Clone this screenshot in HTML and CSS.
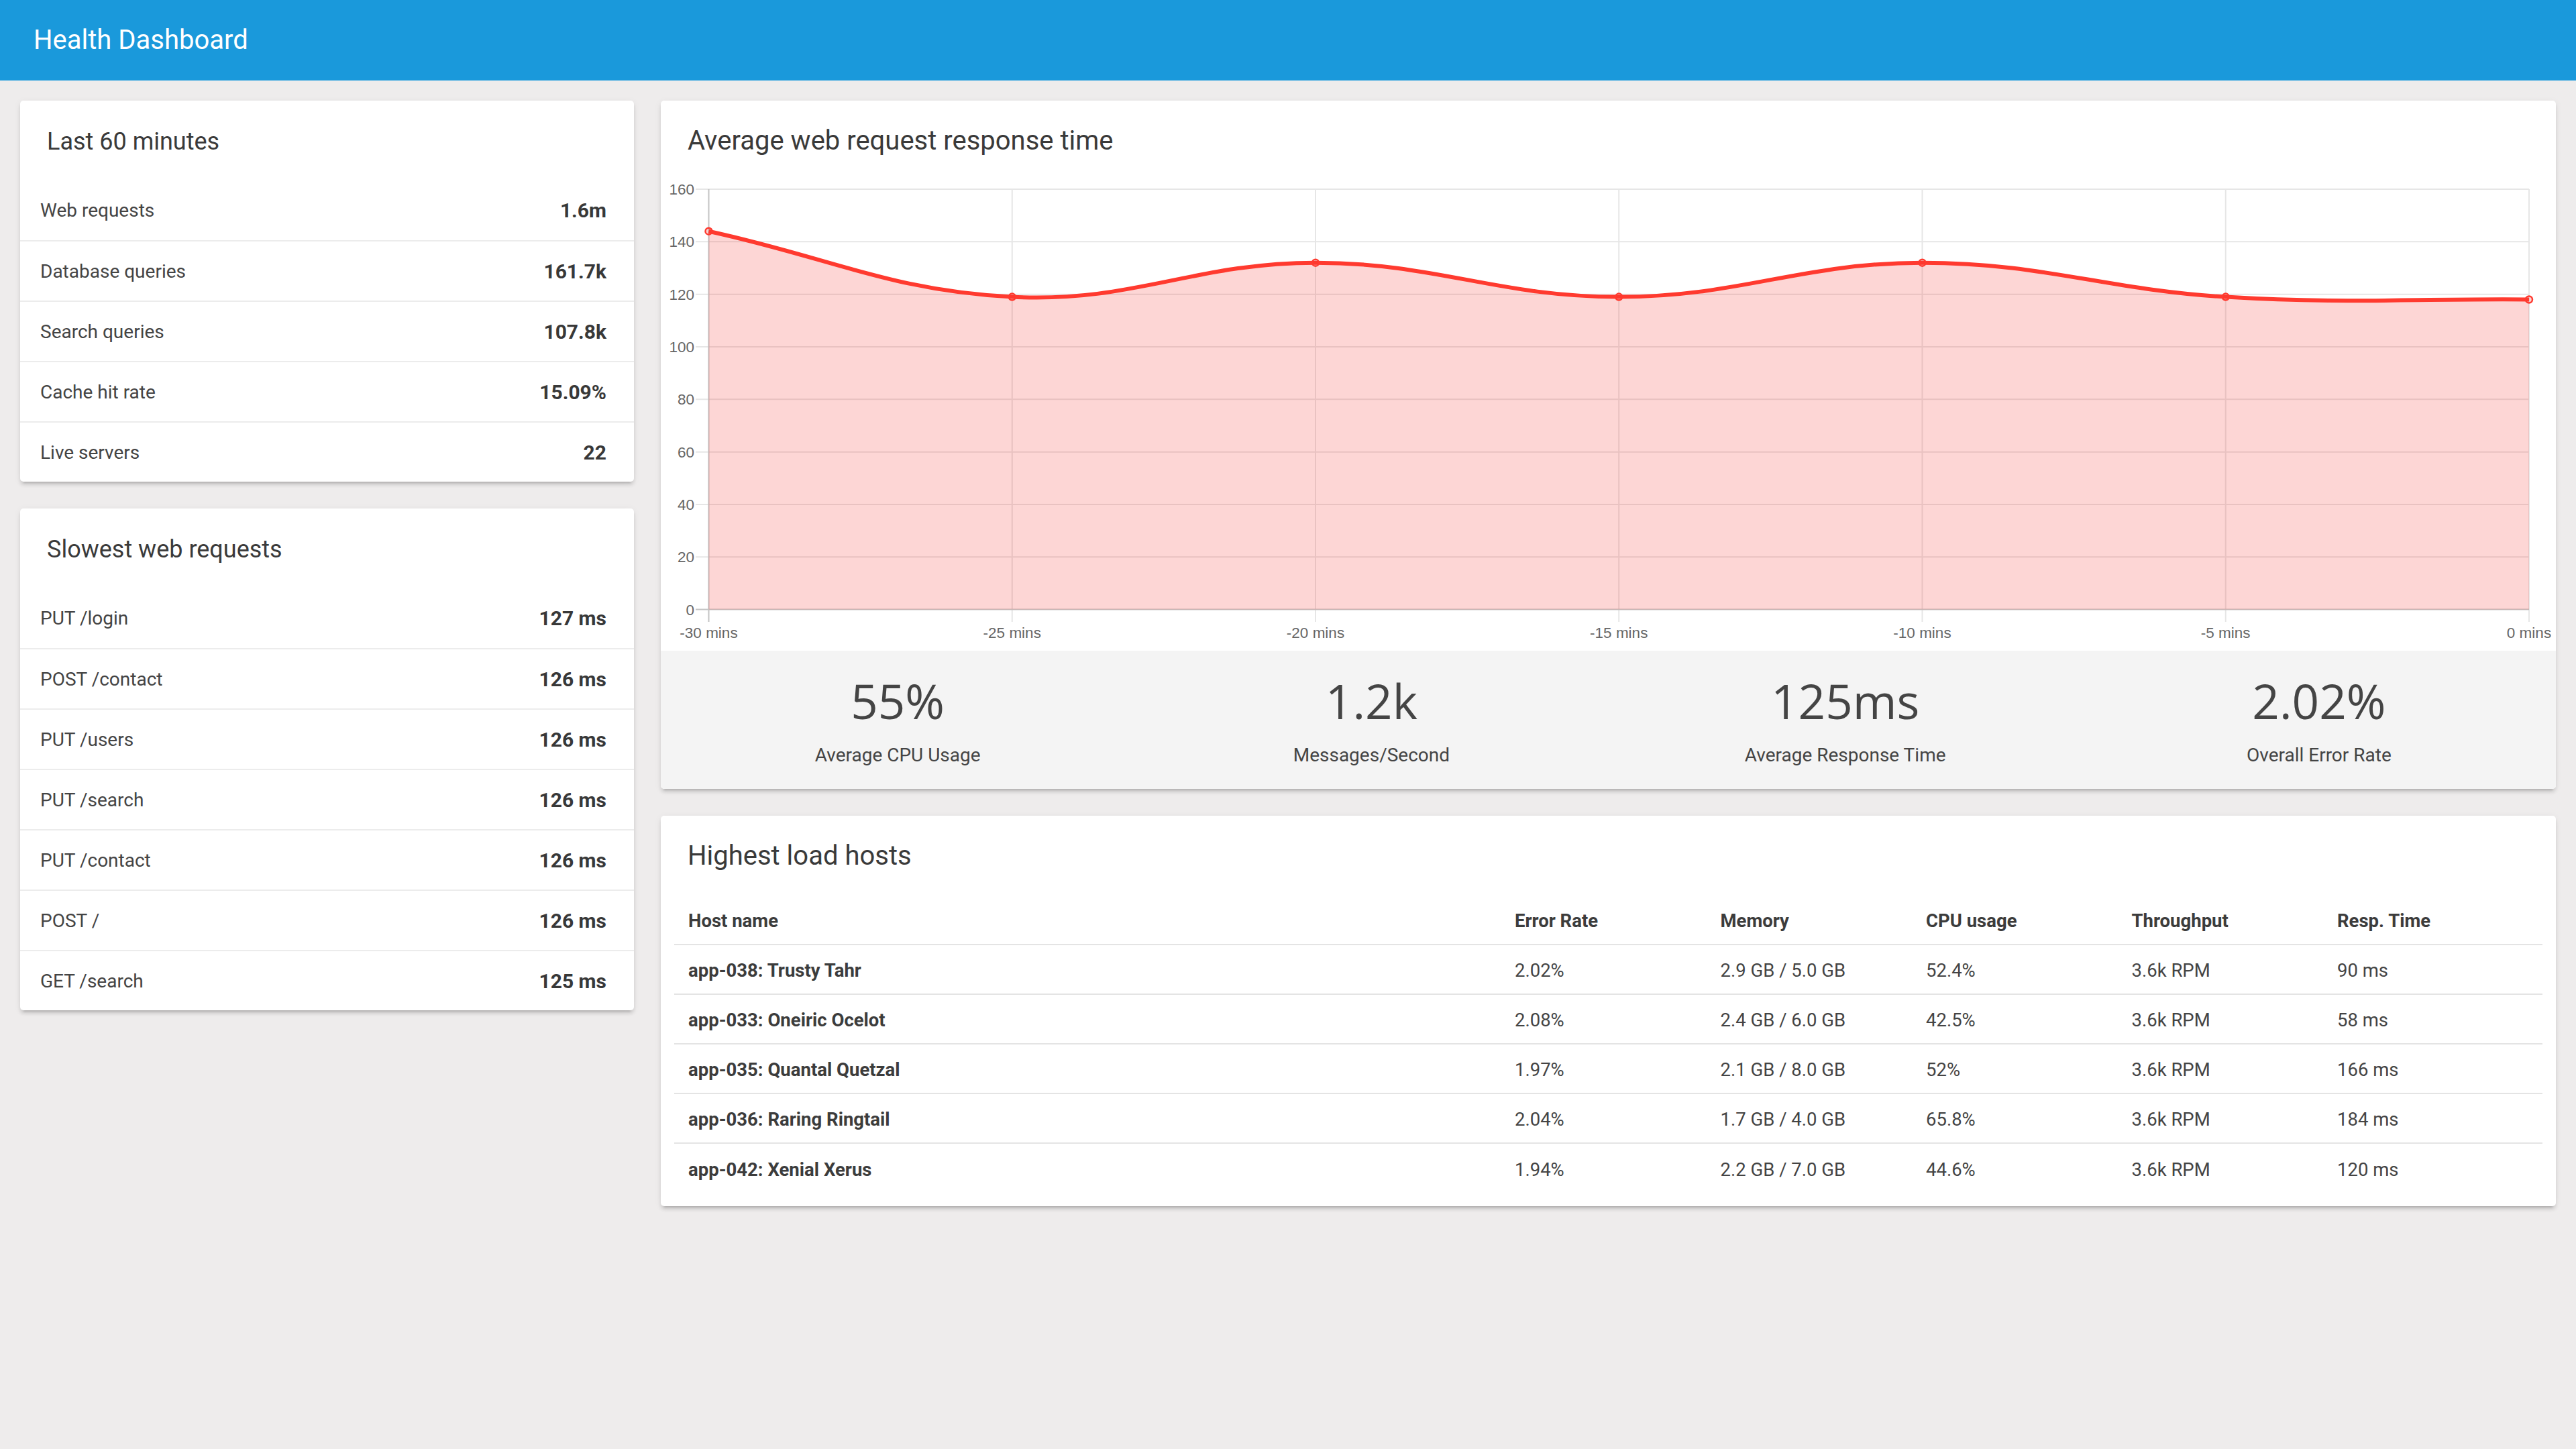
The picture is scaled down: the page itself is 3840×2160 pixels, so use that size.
FILE: index.html
```html
<!DOCTYPE html>
<html lang="en">
<head>
<meta charset="utf-8">
<title>Health Dashboard</title>
<link rel="stylesheet" href="styles.css">
</head>
<body>
<header class="topbar">
  <span class="topbar-title">Health Dashboard</span>
</header>
<main class="grid">
  <section class="col-left">
    <div class="card">
      <h2 class="card-title">Last 60 minutes</h2>
      <ul class="list">
        <li class="list-row"><span class="list-label">Web requests</span><span class="list-value">1.6m</span></li>
        <li class="list-row"><span class="list-label">Database queries</span><span class="list-value">161.7k</span></li>
        <li class="list-row"><span class="list-label">Search queries</span><span class="list-value">107.8k</span></li>
        <li class="list-row"><span class="list-label">Cache hit rate</span><span class="list-value">15.09%</span></li>
        <li class="list-row"><span class="list-label">Live servers</span><span class="list-value">22</span></li>
      </ul>
    </div>
    <div class="card">
      <h2 class="card-title">Slowest web requests</h2>
      <ul class="list">
        <li class="list-row"><span class="list-label">PUT /login</span><span class="list-value">127 ms</span></li>
        <li class="list-row"><span class="list-label">POST /contact</span><span class="list-value">126 ms</span></li>
        <li class="list-row"><span class="list-label">PUT /users</span><span class="list-value">126 ms</span></li>
        <li class="list-row"><span class="list-label">PUT /search</span><span class="list-value">126 ms</span></li>
        <li class="list-row"><span class="list-label">PUT /contact</span><span class="list-value">126 ms</span></li>
        <li class="list-row"><span class="list-label">POST /</span><span class="list-value">126 ms</span></li>
        <li class="list-row"><span class="list-label">GET /search</span><span class="list-value">125 ms</span></li>
      </ul>
    </div>
  </section>
  <section class="col-right">
    <div class="card">
      <h2 class="card-title card-title--lg">Average web request response time</h2>
      <svg class="chart" width="2825" height="701" viewBox="0 0 2825 701">
        <g class="grid-lines">
          <line x1="52" x2="2785" y1="13" y2="13"/>
          <line x1="52" x2="2785" y1="91.33" y2="91.33"/>
          <line x1="52" x2="2785" y1="169.65" y2="169.65"/>
          <line x1="52" x2="2785" y1="247.98" y2="247.98"/>
          <line x1="52" x2="2785" y1="326.3" y2="326.3"/>
          <line x1="52" x2="2785" y1="404.63" y2="404.63"/>
          <line x1="52" x2="2785" y1="482.95" y2="482.95"/>
          <line x1="52" x2="2785" y1="561.28" y2="561.28"/>
          <line x1="523.75" x2="523.75" y1="13" y2="658"/>
          <line x1="976" x2="976" y1="13" y2="658"/>
          <line x1="1428.25" x2="1428.25" y1="13" y2="658"/>
          <line x1="1880.5" x2="1880.5" y1="13" y2="658"/>
          <line x1="2332.75" x2="2332.75" y1="13" y2="658"/>
          <line x1="2785" x2="2785" y1="13" y2="658"/>
        </g>
        <g class="zero-lines">
          <line x1="52" x2="2785" y1="639.6" y2="639.6"/>
          <line x1="71.5" x2="71.5" y1="13" y2="658"/>
        </g>
        <path class="area" d="M71.5,75.7 C252.4,114.86 341.35,164.12 523.75,173.6 C703.2,182.92 795.1,122.7 976,122.7 C1156.9,122.7 1247.35,173.6 1428.25,173.6 C1609.15,173.6 1699.6,122.7 1880.5,122.7 C2061.4,122.7 2151.35,162.6 2332.75,173.6 C2513.15,184.53 2604.1,175.94 2785,177.5 L2785,639.6 L71.5,639.6 Z"/>
        <path class="line" d="M71.5,75.7 C252.4,114.86 341.35,164.12 523.75,173.6 C703.2,182.92 795.1,122.7 976,122.7 C1156.9,122.7 1247.35,173.6 1428.25,173.6 C1609.15,173.6 1699.6,122.7 1880.5,122.7 C2061.4,122.7 2151.35,162.6 2332.75,173.6 C2513.15,184.53 2604.1,175.94 2785,177.5"/>
        <g class="points">
          <circle cx="71.5" cy="75.7" r="5"/>
          <circle cx="523.75" cy="173.6" r="5"/>
          <circle cx="976" cy="122.7" r="5"/>
          <circle cx="1428.25" cy="173.6" r="5"/>
          <circle cx="1880.5" cy="122.7" r="5"/>
          <circle cx="2332.75" cy="173.6" r="5"/>
          <circle cx="2785" cy="177.5" r="5"/>
        </g>
        <g class="y-labels">
          <text x="50" y="21">160</text>
          <text x="50" y="99.3">140</text>
          <text x="50" y="177.7">120</text>
          <text x="50" y="256">100</text>
          <text x="50" y="334.3">80</text>
          <text x="50" y="412.6">60</text>
          <text x="50" y="491">40</text>
          <text x="50" y="569.3">20</text>
          <text x="50" y="647.6">0</text>
        </g>
        <g class="x-labels">
          <text x="71.5" y="681.5">-30 mins</text>
          <text x="523.75" y="681.5">-25 mins</text>
          <text x="976" y="681.5">-20 mins</text>
          <text x="1428.25" y="681.5">-15 mins</text>
          <text x="1880.5" y="681.5">-10 mins</text>
          <text x="2332.75" y="681.5">-5 mins</text>
          <text x="2785" y="681.5">0 mins</text>
        </g>
      </svg>
      <div class="stats">
        <div class="stat"><div class="stat-value">55%</div><div class="stat-label">Average CPU Usage</div></div>
        <div class="stat"><div class="stat-value">1.2k</div><div class="stat-label">Messages/Second</div></div>
        <div class="stat"><div class="stat-value">125ms</div><div class="stat-label">Average Response Time</div></div>
        <div class="stat"><div class="stat-value">2.02%</div><div class="stat-label">Overall Error Rate</div></div>
      </div>
    </div>
    <div class="card">
      <h2 class="card-title card-title--lg">Highest load hosts</h2>
      <div class="hosts">
        <div class="hrow hhead">
          <span class="hcell">Host name</span><span class="hcell">Error Rate</span><span class="hcell">Memory</span><span class="hcell">CPU usage</span><span class="hcell">Throughput</span><span class="hcell">Resp. Time</span>
        </div>
        <div class="hrow">
          <span class="hcell hname">app-038: Trusty Tahr</span><span class="hcell">2.02%</span><span class="hcell">2.9 GB / 5.0 GB</span><span class="hcell">52.4%</span><span class="hcell">3.6k RPM</span><span class="hcell">90 ms</span>
        </div>
        <div class="hrow">
          <span class="hcell hname">app-033: Oneiric Ocelot</span><span class="hcell">2.08%</span><span class="hcell">2.4 GB / 6.0 GB</span><span class="hcell">42.5%</span><span class="hcell">3.6k RPM</span><span class="hcell">58 ms</span>
        </div>
        <div class="hrow">
          <span class="hcell hname">app-035: Quantal Quetzal</span><span class="hcell">1.97%</span><span class="hcell">2.1 GB / 8.0 GB</span><span class="hcell">52%</span><span class="hcell">3.6k RPM</span><span class="hcell">166 ms</span>
        </div>
        <div class="hrow">
          <span class="hcell hname">app-036: Raring Ringtail</span><span class="hcell">2.04%</span><span class="hcell">1.7 GB / 4.0 GB</span><span class="hcell">65.8%</span><span class="hcell">3.6k RPM</span><span class="hcell">184 ms</span>
        </div>
        <div class="hrow">
          <span class="hcell hname">app-042: Xenial Xerus</span><span class="hcell">1.94%</span><span class="hcell">2.2 GB / 7.0 GB</span><span class="hcell">44.6%</span><span class="hcell">3.6k RPM</span><span class="hcell">120 ms</span>
        </div>
      </div>
    </div>
  </section>
</main>
</body>
</html>
```
FILE: styles.css
```css
html, body {
  margin: 0;
  padding: 0;
  background: #eeecec;
}

body {
  font-family: Roboto, "Liberation Sans", Arial, sans-serif;
  color: #444;
  min-height: 100vh;
}

.topbar {
  height: 120px;
  background: #1a99db;
  display: flex;
  align-items: center;
  padding: 0 50px;
  box-sizing: border-box;
}

.topbar-title {
  color: #ffffff;
  font-size: 40px;
  font-weight: 400;
  line-height: 120px;
}

.grid {
  display: flex;
  gap: 40px;
  padding: 30px 30px 0;
  align-items: flex-start;
}

.col-left {
  width: 915px;
  flex: none;
  display: flex;
  flex-direction: column;
  gap: 40px;
}

.col-right {
  width: 2825px;
  flex: none;
  display: flex;
  flex-direction: column;
  gap: 40px;
}

.card {
  background: #ffffff;
  border-radius: 5px;
  overflow: hidden;
  box-shadow: 0 5px 5px 0 rgba(0, 0, 0, 0.10), 0 7px 3px -5px rgba(0, 0, 0, 0.14), 0 2px 12px 0 rgba(0, 0, 0, 0.06);
}

.card-title {
  margin: 0;
  height: 118px;
  box-sizing: border-box;
  padding: 43px 40px 0;
  font-size: 36px;
  line-height: 36px;
  font-weight: 400;
  color: #3a3a3a;
}

.card-title--lg {
  height: 119px;
  padding-top: 40px;
  font-size: 40px;
  line-height: 40px;
}

.list {
  list-style: none;
  margin: 0;
  padding: 0;
}

.list-row {
  height: 90px;
  box-sizing: border-box;
  display: flex;
  align-items: center;
  justify-content: space-between;
  padding: 0 41px 0 30px;
}

.list-row + .list-row {
  border-top: 2px solid #ececec;
}

.list-label {
  font-size: 28px;
  color: #444;
}

.list-value {
  font-size: 30px;
  font-weight: 700;
  color: #383838;
}

.chart {
  display: block;
}

.grid-lines line {
  stroke: #e6e6e6;
  stroke-width: 2;
}

.zero-lines line {
  stroke: #c4c4c4;
  stroke-width: 2;
}

.area {
  fill: rgba(245, 50, 45, 0.2);
}

.line {
  fill: none;
  stroke: #ff3a2f;
  stroke-width: 6;
  stroke-linejoin: round;
}

.points circle {
  fill: rgba(245, 50, 45, 0.2);
  stroke: #ff3a2f;
  stroke-width: 2.5;
}

.y-labels text,
.x-labels text {
  font-family: "Liberation Sans", Arial, sans-serif;
  font-size: 22.5px;
  fill: #666;
}

.y-labels text {
  text-anchor: end;
}

.x-labels text {
  text-anchor: middle;
}

.stats {
  height: 206px;
  box-sizing: border-box;
  background: #f4f4f4;
  display: flex;
  padding-top: 39px;
}

.stat {
  flex: 1;
  display: flex;
  flex-direction: column;
  align-items: center;
}

.stat-value {
  font-family: "Open Sans", "Noto Sans", sans-serif;
  font-size: 71px;
  line-height: 71px;
  color: #444;
}

.stat-label {
  margin-top: 32px;
  font-size: 28px;
  line-height: 28px;
  color: #444;
}

.hosts {
  margin: 0 20px 19px;
}

.hrow {
  display: grid;
  grid-template-columns: 1232px repeat(4, 306.5px) 1fr;
  align-items: center;
  height: 74px;
  box-sizing: border-box;
  padding-top: 3px;
  border-bottom: 2px solid #e4e4e4;
  font-size: 27.5px;
  color: #444;
}

.hrow:last-child {
  border-bottom: none;
}

.hcell {
  padding-left: 21px;
  white-space: nowrap;
}

.hhead {
  font-weight: 700;
  color: #3c3c3c;
}

.hname {
  font-weight: 700;
  color: #3c3c3c;
}
```
